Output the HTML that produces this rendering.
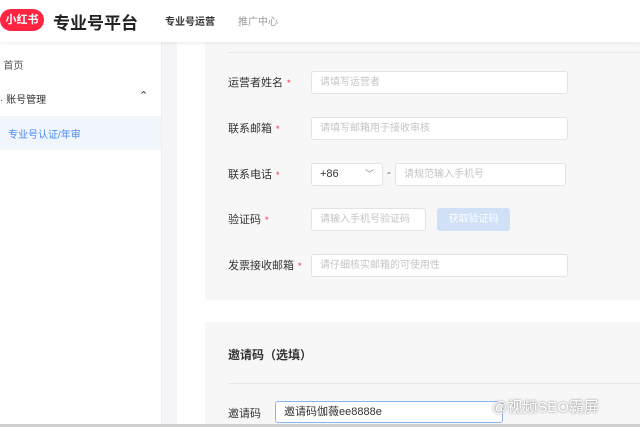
<!DOCTYPE html>
<html><head><meta charset="utf-8"><style>
*{margin:0;padding:0;box-sizing:border-box}
body{width:640px;height:427px;overflow:hidden;background:#fff;font-family:"Liberation Sans","Noto Sans CJK SC",sans-serif;position:relative;color:#333}
.hdr{position:absolute;left:0;top:0;width:640px;height:42px;background:#fff;box-shadow:0 1px 4px rgba(0,0,0,.08);z-index:2}
.logo{position:absolute;left:0;top:9px;width:44px;height:22px;border-radius:11px;background:#ff2442;color:#fff;font-size:11px;font-weight:bold;text-align:center;line-height:22px}
.t{position:absolute;white-space:nowrap}
.side{position:absolute;left:0;top:42px;width:162px;height:385px;background:#fff;border-right:1px solid #eee}
.strip{position:absolute;left:162px;top:42px;width:15px;height:385px;background:#f5f5f7}
.card{position:absolute;left:205px;width:435px;background:#f7f7f7}
.lab{position:absolute;font-size:11px;color:#333}
.lab i{color:#ff2442;font-style:normal;font-size:9px;margin-left:4px}
.in{position:absolute;height:23px;border:1px solid #e3e3e3;border-radius:3px;background:#fff;font-size:10px;color:#c4c4c4;padding-left:8px;line-height:21px;white-space:nowrap}
</style></head><body>
<div class="hdr">
<div class="logo">小红书</div>
<div class="t" style="left:53px;top:9px;font-size:17px;font-weight:bold;color:#222">专业号平台</div>
<div class="t" style="left:165px;top:13px;font-size:10px;font-weight:bold;color:#333">专业号运营</div>
<div class="t" style="left:238px;top:13px;font-size:10px;color:#999">推广中心</div>
</div>
<div class="side">
<div class="t" style="left:-3px;top:15px;font-size:10px;color:#555">▫ 首页</div>
<div class="t" style="left:0;top:49px;font-size:10px;color:#333">· 账号管理</div>
<div class="t" style="left:139px;top:47px;font-size:11px;color:#333">⌃</div>
<div style="position:absolute;left:0;top:74px;width:161px;height:34px;background:#f1f5fc"></div>
<div class="t" style="left:8px;top:84px;font-size:10px;color:#4a8af4">专业号认证/年审</div>
</div>
<div class="strip"></div>
<div class="card" style="top:42px;height:258px">
<div style="position:absolute;left:23px;top:10px;right:0;height:1px;background:#e6e6e6"></div>
<div class="lab" style="left:23px;top:32px">运营者姓名<i>*</i></div>
<div class="lab" style="left:23px;top:78px">联系邮箱<i>*</i></div>
<div class="lab" style="left:23px;top:124px">联系电话<i>*</i></div>
<div class="lab" style="left:23px;top:169px">验证码<i>*</i></div>
<div class="lab" style="left:23px;top:215px">发票接收邮箱<i>*</i></div>
</div>
<div class="in" style="left:311px;top:71px;width:257px">请填写运营者</div>
<div class="in" style="left:311px;top:117px;width:257px">请填写邮箱用于接收审核</div>
<div class="in" style="left:311px;top:163px;width:72px;color:#333;font-size:11px">+86<span style="position:absolute;right:8px;top:0;color:#888;font-size:9px">﹀</span></div>
<div class="t" style="left:387px;top:167px;font-size:11px;color:#555">-</div>
<div class="in" style="left:395px;top:163px;width:171px">请规范输入手机号</div>
<div class="in" style="left:311px;top:208px;width:115px">请输入手机号验证码</div>
<div style="position:absolute;left:437px;top:208px;width:73px;height:23px;background:#cfe0f7;border-radius:3px;color:#fff;font-size:10px;text-align:center;line-height:23px">获取验证码</div>
<div class="in" style="left:311px;top:254px;width:257px">请仔细核实邮箱的可使用性</div>
<div class="card" style="top:322px;height:105px">
<div class="t" style="left:23px;top:24px;font-size:12px;font-weight:bold;color:#333">邀请码（选填）</div>
<div style="position:absolute;left:23px;top:61px;right:0;height:1px;background:#e6e6e6"></div>
<div class="lab" style="left:23px;top:83px">邀请码</div>
</div>
<div class="in" style="left:275px;top:401px;width:228px;height:22px;border-color:#8ab4f0;color:#333;font-size:11px">邀请码伽薇ee8888e</div>
<div class="t" style="left:492px;top:396px;font-size:15px;color:#fff;text-shadow:0 0 2px #777">@视频SEO霸屏</div>
<div style="position:absolute;left:0;top:424px;width:640px;height:3px;background:#cfcfcf"></div>
</body></html>
